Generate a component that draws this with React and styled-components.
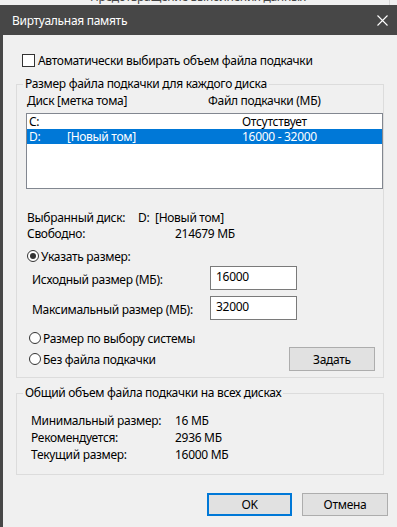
import React from "react";
import styled, { createGlobalStyle } from "styled-components";

const GlobalStyle = createGlobalStyle`
  * { box-sizing: border-box; }
  html, body { margin: 0; padding: 0; background: #f0f0f0; }
  #root {
    width: 397px;
    height: 527px;
    overflow: hidden;
    font-family: "Noto Sans", "Segoe UI", sans-serif;
    font-size: 12px;
    letter-spacing: -0.3px;
    color: #000;
  }
`;

const BehindStrip = styled.div`
  height: 5px;
  overflow: hidden;
  background: #f0f0f0;
`;

const BehindText = styled.div`
  width: 390px;
  margin-top: -11px;
  padding-left: 90px;
  line-height: 16px;
  color: #444;
  border-right: 1px solid #d6d6d6;
`;

const Window = styled.div`
  height: 522px;
  border-left: 3px solid #474747;
  display: flex;
  flex-direction: column;
`;

const TitleBar = styled.div`
  height: 30px;
  flex: none;
  background: #474747;
  color: #fff;
  display: flex;
  align-items: center;
  justify-content: space-between;
  padding: 0 9px;
`;

const Body = styled.div`
  flex: 1;
  padding-top: 17px;
  background: #f0f0f0;
`;

const CheckRow = styled.label`
  display: flex;
  align-items: center;
  gap: 3px;
  height: 16px;
  margin-left: 19px;
`;

const CheckBox = styled.span`
  width: 13px;
  height: 13px;
  border: 1px solid #333;
  background: #fff;
`;

const Group = styled.fieldset`
  margin: ${(p) => p.$top}px 0 0 13px;
  width: 368px;
  min-width: 0;
  border: 1px solid #dcdcdc;
  padding: ${(p) => p.$pad};
`;

const Legend = styled.legend`
  padding: 0 2px;
  margin-left: ${(p) => p.$shift}px;
  line-height: 16px;
`;

const HeaderRow = styled.div`
  display: flex;
  height: 16px;
  line-height: 16px;
`;

const HeaderCell = styled.span`
  width: ${(p) => p.$w || "auto"};
`;

const ListBox = styled.div`
  margin: 4px 0 0 -1px;
  height: 76px;
  border: 1px solid #828790;
  background: #fff;
`;

const ListRow = styled.div`
  display: flex;
  align-items: center;
  height: 15px;
  line-height: 15px;
  padding-left: 2px;
  overflow: hidden;
  background: ${(p) => (p.$selected ? "#0078d7" : "transparent")};
  color: ${(p) => (p.$selected ? "#fff" : "#000")};
`;

const ListCell = styled.span`
  width: ${(p) => p.$w || "auto"};
`;

const InfoRow = styled.div`
  display: flex;
  height: ${(p) => p.$h || 16}px;
  line-height: ${(p) => p.$h || 16}px;
  margin-top: ${(p) => p.$top || 0}px;
`;

const InfoLabel = styled.span`
  width: ${(p) => p.$w}px;
  flex: none;
`;

const RadioRow = styled.label`
  display: flex;
  align-items: center;
  gap: 2px;
  height: 16px;
  margin: ${(p) => p.$top}px 0 0 ${(p) => p.$left || 0}px;
`;

const Radio = styled.span`
  width: 12px;
  height: 12px;
  border-radius: 50%;
  border: 1px solid #333;
  background: #fff;
  display: flex;
  align-items: center;
  justify-content: center;

  &::after {
    content: "";
    width: 6px;
    height: 6px;
    border-radius: 50%;
    background: ${(p) => (p.$checked ? "#333" : "transparent")};
  }
`;

const SizeRow = styled.div`
  display: flex;
  align-items: center;
  height: 24px;
  margin: ${(p) => p.$top}px 0 0 5px;
`;

const SizeLabel = styled.span`
  width: 178px;
  padding-top: 3px;
`;

const Field = styled.input`
  width: 87px;
  height: 24px;
  border: 1px solid #7a7a7a;
  background: #fff;
  padding: 0 0 3px 5px;
  font: inherit;
  letter-spacing: inherit;
  color: #000;
  outline: none;
`;

const BottomRow = styled.div`
  display: flex;
  align-items: center;
  justify-content: space-between;
  height: 24px;
  margin-top: 1px;
  padding-right: 8px;
`;

const Button = styled.button`
  width: ${(p) => p.$w}px;
  height: ${(p) => p.$h}px;
  font: inherit;
  letter-spacing: inherit;
  color: #000;
  background: #e1e1e1;
  border: ${(p) => (p.$default ? "2px solid #0078d7" : "1px solid #adadad")};
  padding: 0;
`;

const Footer = styled.div`
  display: flex;
  justify-content: flex-end;
  gap: 10px;
  margin-top: 18px;
  padding-right: 9px;
`;

const CloseIcon = () => (
  <svg width="11" height="11" viewBox="0 0 11 11">
    <path d="M0.5 0.5 L10.5 10.5 M10.5 0.5 L0.5 10.5" stroke="#fff" strokeWidth="1.1" />
  </svg>
);

const App = () => {
  return (
    <>
      <GlobalStyle />
      <BehindStrip>
        <BehindText>Предотвращение выполнения данных</BehindText>
      </BehindStrip>
      <Window>
        <TitleBar>
          <span>Виртуальная память</span>
          <CloseIcon />
        </TitleBar>
        <Body>
          <CheckRow>
            <CheckBox />
            Автоматически выбирать объем файла подкачки
          </CheckRow>

          <Group $top={8} $pad="1px 0 6px 10px">
            <Legend $shift={-4}>Размер файла подкачки для каждого диска</Legend>
            <HeaderRow>
              <HeaderCell $w="181px">Диск [метка тома]</HeaderCell>
              <HeaderCell>Файл подкачки (МБ)</HeaderCell>
            </HeaderRow>
            <ListBox>
              <ListRow>
                <ListCell $w="38px">C:</ListCell>
                <ListCell $w="175px"></ListCell>
                <ListCell>Отсутствует</ListCell>
              </ListRow>
              <ListRow $selected>
                <ListCell $w="38px">D:</ListCell>
                <ListCell $w="175px">[Новый том]</ListCell>
                <ListCell>16000 - 32000</ListCell>
              </ListRow>
            </ListBox>

            <InfoRow $top={21}>
              <InfoLabel $w={111}>Выбранный диск:</InfoLabel>
              <span>D:&nbsp;&nbsp;[Новый том]</span>
            </InfoRow>
            <InfoRow>
              <InfoLabel $w={148}>Свободно:</InfoLabel>
              <span>214679 МБ</span>
            </InfoRow>

            <RadioRow $top={6}>
              <Radio $checked />
              Указать размер:
            </RadioRow>
            <SizeRow $top={2}>
              <SizeLabel>Исходный размер (МБ):</SizeLabel>
              <Field readOnly value="16000" />
            </SizeRow>
            <SizeRow $top={6}>
              <SizeLabel>Максимальный размер (МБ):</SizeLabel>
              <Field readOnly value="32000" />
            </SizeRow>

            <RadioRow $top={10} $left={2}>
              <Radio />
              Размер по выбору системы
            </RadioRow>
            <BottomRow>
              <RadioRow $top={0} $left={2}>
                <Radio />
                Без файла подкачки
              </RadioRow>
              <Button $w={86} $h={24}>Задать</Button>
            </BottomRow>
          </Group>

          <Group $top={7} $pad="11px 0 11px 14px">
            <Legend $shift={-8}>Общий объем файла подкачки на всех дисках</Legend>
            <InfoRow $h={17}>
              <InfoLabel $w={144}>Минимальный размер:</InfoLabel>
              <span>16 МБ</span>
            </InfoRow>
            <InfoRow $h={17}>
              <InfoLabel $w={144}>Рекомендуется:</InfoLabel>
              <span>2936 МБ</span>
            </InfoRow>
            <InfoRow $h={17}>
              <InfoLabel $w={144}>Текущий размер:</InfoLabel>
              <span>16000 МБ</span>
            </InfoRow>
          </Group>

          <Footer>
            <Button $w={85} $h={23} $default>OK</Button>
            <Button $w={86} $h={23}>Отмена</Button>
          </Footer>
        </Body>
      </Window>
    </>
  );
};

export default App;
